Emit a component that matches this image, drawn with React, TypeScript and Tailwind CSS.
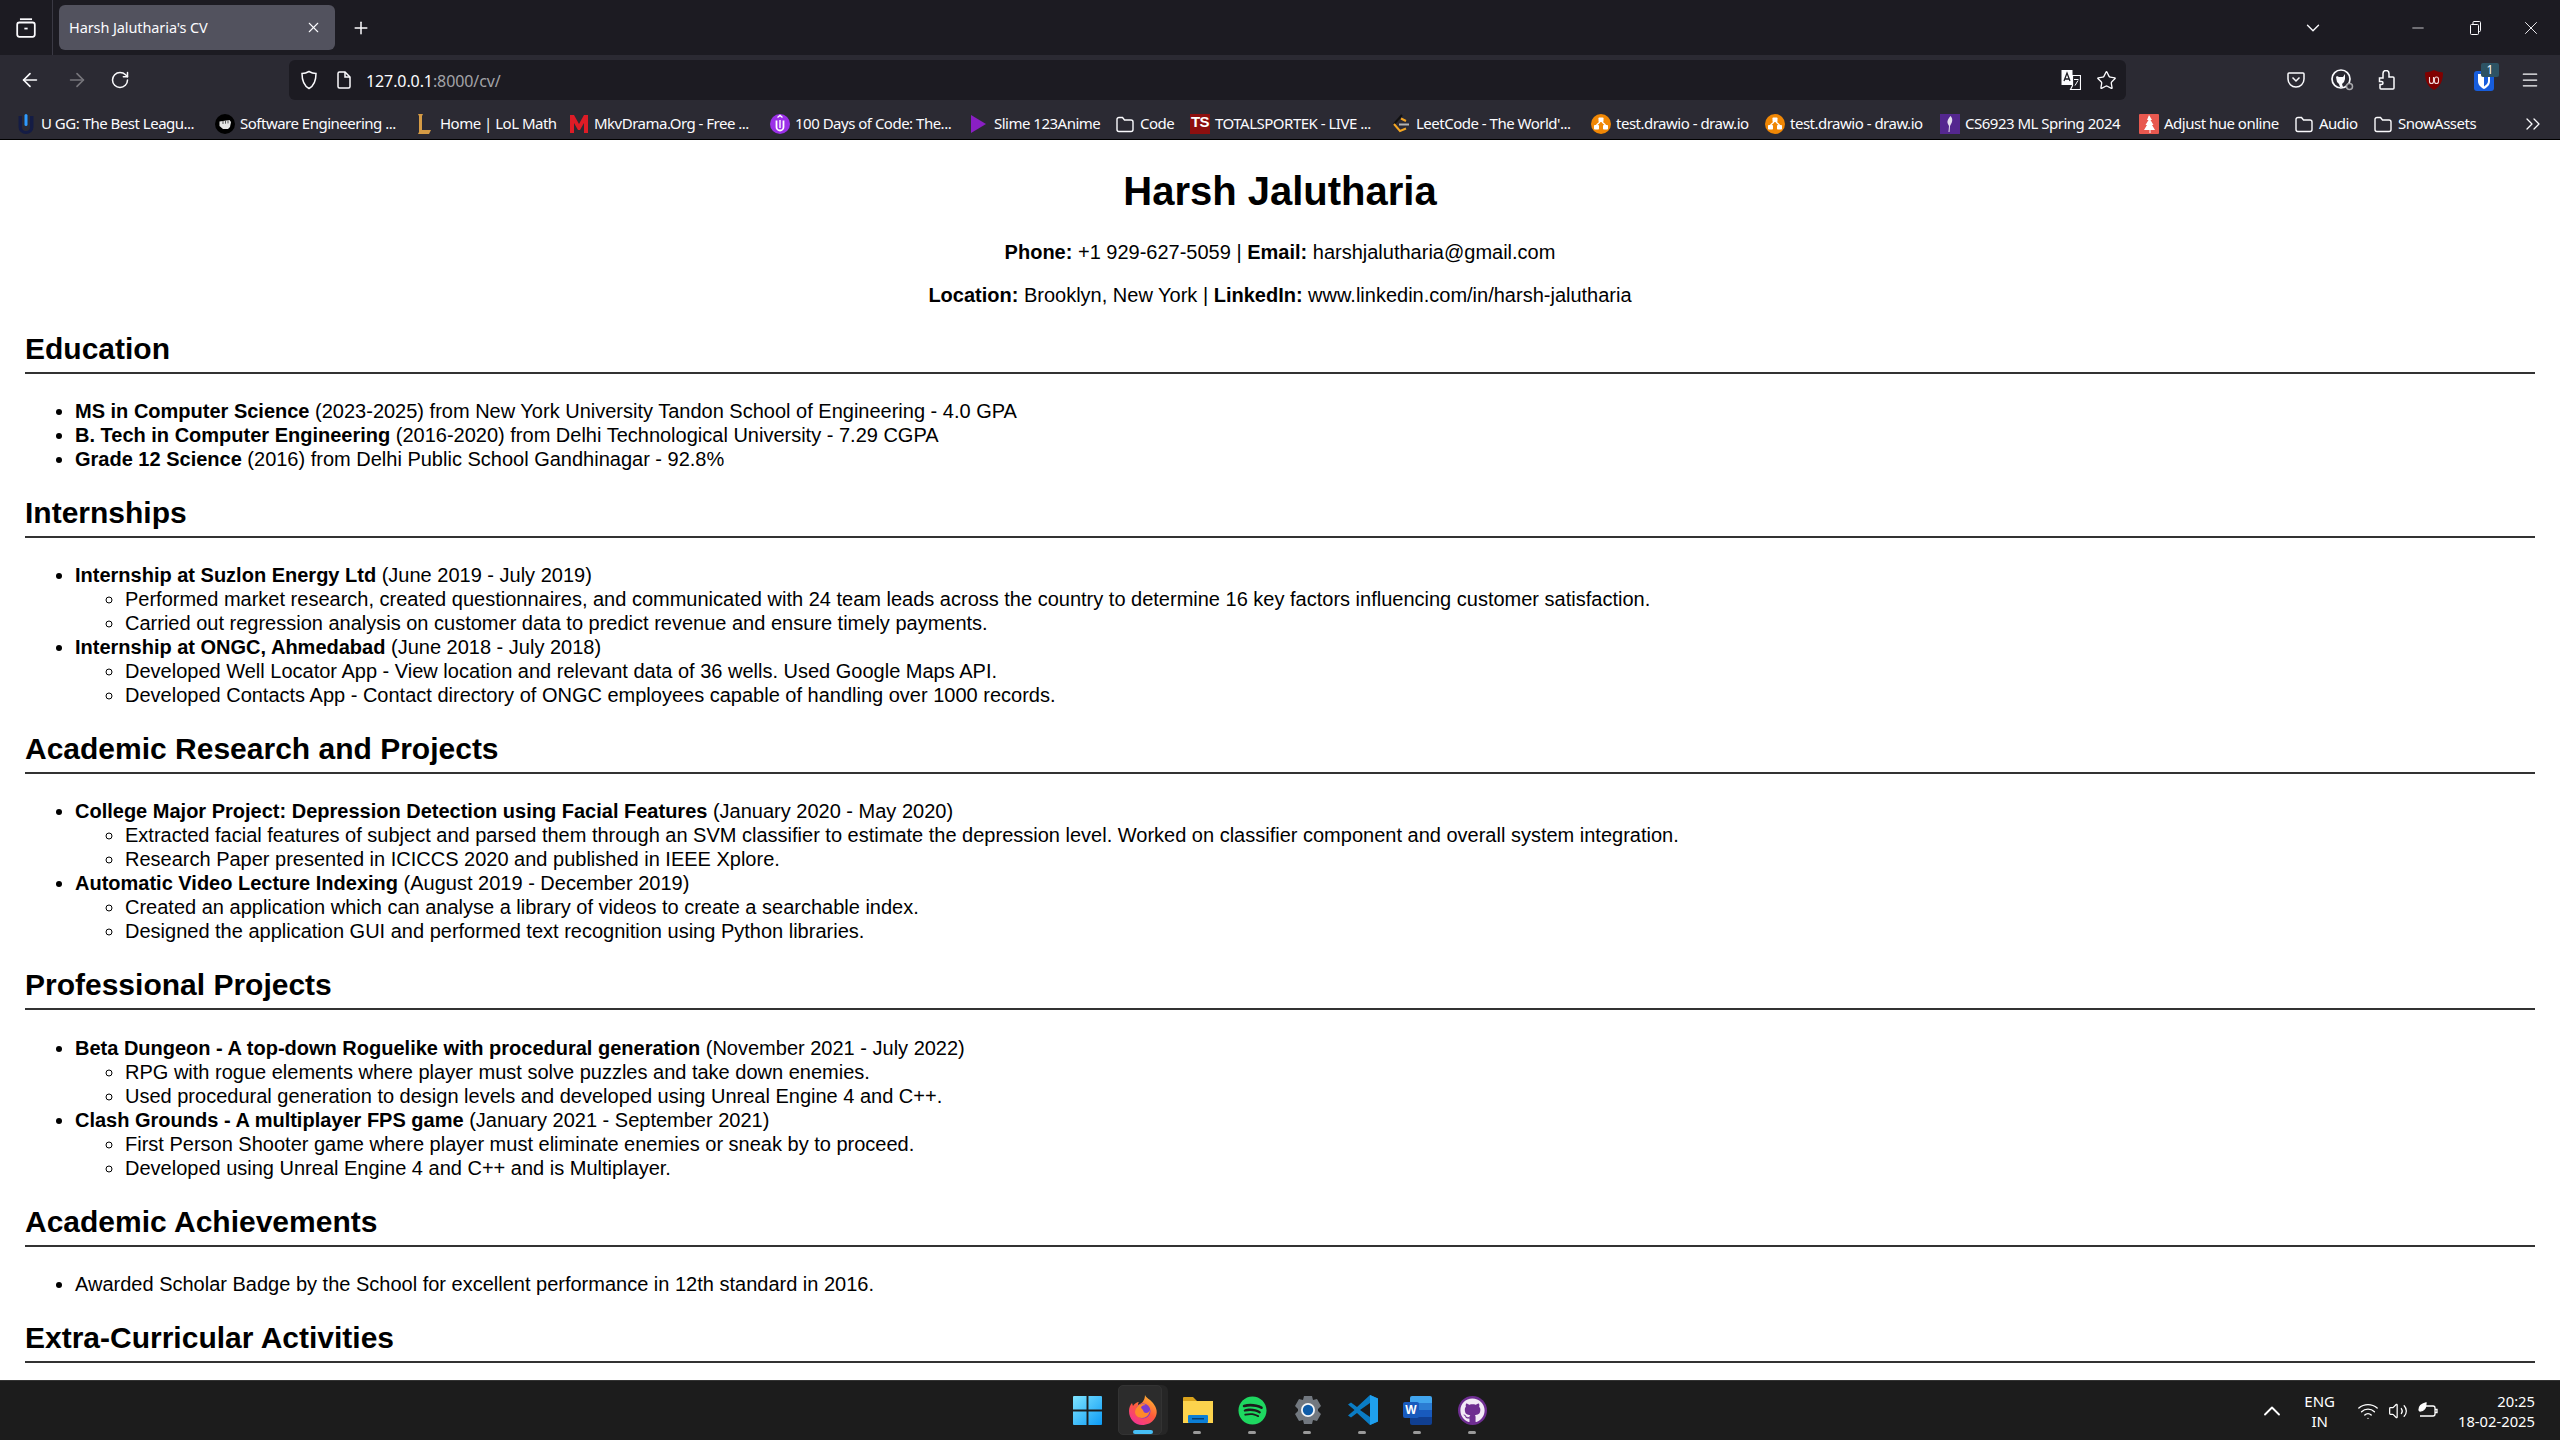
import type { ReactNode } from "react";
import { ArrowLeft, ArrowRight, ChevronDown, ChevronUp, ChevronsRight, Menu, Minus, Plus, RotateCw, Star, Volume2, Wifi, X } from "lucide-react";
import { FaGithub, FaSpotify } from "react-icons/fa";

const barFont = "font-['Noto_Sans',sans-serif]";

function FolderIcon() {
  return (
    <svg viewBox="0 0 20 20" className="w-[20px] h-[20px] shrink-0" fill="none" stroke="#fbfbfe" strokeWidth="1.4">
      <path d="M2 5.500a2 2 0 0 1 2-2h3.500l2 2.500H16a2 2 0 0 1 2 2v7.500a2 2 0 0 1-2 2H4a2 2 0 0 1-2-2z" />
    </svg>
  );
}

function UggIcon() {
  return (
    <svg viewBox="0 0 20 20" className="w-[20px] h-[20px] shrink-0">
      <path d="M2.500 2h3.500v11a4 4 0 0 0 8 0V2h3.500v11a7.500 7 0 0 1-15 0z" fill="#141c45" />
      <rect x="8.500" y="0" width="3" height="12" rx="1.500" fill="#2f9bff" />
    </svg>
  );
}

function FistIcon() {
  return (
    <svg viewBox="0 0 20 20" className="w-[20px] h-[20px] shrink-0">
      <circle cx="10" cy="10" r="10" fill="#000" />
      <path d="M4.500 7.500l10-1.500 1.500 2-1 5-2 2H8l-3.500-3z" fill="#e8e8e8" />
      <path d="M8 7v3M10.500 6.700v3M13 6.400v3" stroke="#333" strokeWidth="0.8" />
    </svg>
  );
}

function LolIcon() {
  return (
    <svg viewBox="0 0 20 20" className="w-[20px] h-[20px] shrink-0">
      <path d="M3 0h5l-1 2v14h9l-2 4H3l1-2V2z" fill="#d59b45" />
    </svg>
  );
}

function MkvIcon() {
  return (
    <svg viewBox="0 0 20 20" className="w-[20px] h-[20px] shrink-0">
      <path d="M1 19V1h4l5 9 5-9h4v18h-4V9l-4 7h-2L5 9v10z" fill="#dd1c26" />
    </svg>
  );
}

function HundredIcon() {
  return (
    <svg viewBox="0 0 20 20" className="w-[20px] h-[20px] shrink-0">
      <circle cx="10" cy="10" r="10" fill="#9b30e8" />
      <path d="M6.500 6.500v6.500a3.500 3.500 0 0 0 7 0V6.500" fill="none" stroke="#fff" strokeWidth="1.800" />
      <path d="M7.500 3.500L10 1.500l2.500 2" fill="none" stroke="#fff" strokeWidth="1.400" />
      <path d="M10 6v8" stroke="#fff" strokeWidth="1.400" />
    </svg>
  );
}

function PlayIcon() {
  return (
    <svg viewBox="0 0 20 20" className="w-[20px] h-[20px] shrink-0">
      <path d="M2 1l15 9-15 9z" fill="#8a1fc4" />
    </svg>
  );
}

function TsIcon() {
  return (
    <div className="w-[20px] h-[20px] shrink-0 bg-[#8d0f0f] flex items-start justify-center text-white text-[15px] leading-[16px] font-bold font-['Liberation_Sans',sans-serif] tracking-[-0.5px]">
      TS
    </div>
  );
}

function LeetIcon() {
  return (
    <svg viewBox="0 0 20 20" className="w-[20px] h-[20px] shrink-0" fill="none" strokeWidth="2">
      <path d="M11 1L3 10" stroke="#111" />
      <path d="M3 10l6 7 6-2.500" stroke="#f5a623" />
      <path d="M10 4.500l5 2.500" stroke="#f5a623" />
      <path d="M8 10.500h10" stroke="#b3b3b3" />
    </svg>
  );
}

function DrawioIcon() {
  return (
    <svg viewBox="0 0 20 20" className="w-[20px] h-[20px] shrink-0">
      <circle cx="10" cy="10" r="10" fill="#f08705" />
      <rect x="7.500" y="3.500" width="5" height="4.500" rx="0.800" fill="#fff" />
      <rect x="3" y="11" width="5" height="4.500" rx="0.800" fill="#fff" />
      <rect x="12" y="11" width="5" height="4.500" rx="0.800" fill="#fff" />
      <path d="M9 8l-3.500 3M11 8l3.500 3" stroke="#fff" strokeWidth="1.400" />
    </svg>
  );
}

function FeatherIcon() {
  return (
    <svg viewBox="0 0 20 20" className="w-[20px] h-[20px] shrink-0">
      <rect width="20" height="20" fill="#54278f" />
      <path d="M10.500 2c2 2 2.500 5 .5 8l-1 2-.5 6h-1l.5-6-1.500-3c-.5-2 1-5 3-7z" fill="#e5e0ee" />
    </svg>
  );
}

function TreeIcon() {
  return (
    <svg viewBox="0 0 20 20" className="w-[20px] h-[20px] shrink-0">
      <rect width="20" height="20" rx="1" fill="#e8584f" />
      <path d="M10 1l3 5h-1.500l3 5h-1.500l3 5h-4.500v3h-1v-3H5l3-5H6.500l3-5H8z" fill="#fff" />
    </svg>
  );
}

type Bookmark = { icon: ReactNode; label: string; width: string };

const bookmarks: Bookmark[] = [
  { icon: <UggIcon />, label: "U GG: The Best Leagu...", width: "w-[158px]" },
  { icon: <FistIcon />, label: "Software Engineering ...", width: "w-[159px]" },
  { icon: <LolIcon />, label: "Home | LoL Math", width: "w-[113px]" },
  { icon: <MkvIcon />, label: "MkvDrama.Org - Free ...", width: "w-[160px]" },
  { icon: <HundredIcon />, label: "100 Days of Code: The...", width: "w-[158px]" },
  { icon: <PlayIcon />, label: "Slime 123Anime", width: "w-[105px]" },
  { icon: <FolderIcon />, label: "Code", width: "w-[34px]" },
  { icon: <TsIcon />, label: "TOTALSPORTEK - LIVE ...", width: "w-[160px]" },
  { icon: <LeetIcon />, label: "LeetCode - The World'...", width: "w-[159px]" },
  { icon: <DrawioIcon />, label: "test.drawio - draw.io", width: "w-[133px]" },
  { icon: <DrawioIcon />, label: "test.drawio - draw.io", width: "w-[134px]" },
  { icon: <FeatherIcon />, label: "CS6923 ML Spring 2024", width: "w-[158px]" },
  { icon: <TreeIcon />, label: "Adjust hue online", width: "w-[114px]" },
  { icon: <FolderIcon />, label: "Audio", width: "w-[38px]" },
  { icon: <FolderIcon />, label: "SnowAssets", width: "w-[78px]" },
];

function TitleBar() {
  return (
    <div className={`h-[55px] shrink-0 bg-[#1c1b22] flex items-stretch text-[#fbfbfe] ${barFont}`}>
      <div className="w-[53px] flex items-center justify-center border-r border-[#3a3944]">
        <svg viewBox="0 0 20 20" className="w-[22px] h-[22px]" fill="none" stroke="#fbfbfe" strokeWidth="1.600">
          <rect x="2" y="5" width="16" height="13" rx="2" />
          <path d="M4.500 2h11" />
          <path d="M8.500 10.500h3" />
        </svg>
      </div>
      <div className="ml-[6px] mt-[5px] w-[276px] h-[45px] bg-[#52525e] rounded-[6px] flex items-center justify-between pl-[10px] pr-[13px]">
        <span className="text-[14.5px] tracking-[-0.1px]">Harsh Jalutharia's CV</span>
        <X size={17} strokeWidth={1.5} />
      </div>
      <div className="ml-[16px] flex items-center">
        <Plus size={20} strokeWidth={1.8} />
      </div>
      <div className="flex-1" />
      <div className="flex items-center">
        <ChevronDown size={22} strokeWidth={1.5} className="mr-[85px]" />
        <Minus size={18} strokeWidth={1} className="mr-[40px]" />
        <svg viewBox="0 0 16 16" className="w-[16px] h-[16px] mr-[37px]" fill="none" stroke="#fbfbfe" strokeWidth="1">
          <rect x="3.500" y="4.500" width="8" height="10" rx="1" />
          <path d="M6 4.500V2.500a1 1 0 0 1 1-1h5.500a1 1 0 0 1 1 1v8a1 1 0 0 1-1 1h-1" />
        </svg>
        <X size={22} strokeWidth={1} className="mr-[18px]" />
      </div>
    </div>
  );
}

function NavBar() {
  return (
    <div className="h-[48px] shrink-0 bg-[#2b2a33] pt-[2px] flex items-center text-[#fbfbfe]">
      <ArrowLeft size={22} strokeWidth={1.8} className="ml-[19px]" />
      <ArrowRight size={22} strokeWidth={1.8} className="ml-[25px] text-[#77767c]" />
      <RotateCw size={20} strokeWidth={1.8} className="ml-[22px]" />
      <div className={`ml-[159px] h-[40px] w-[1837px] bg-[#1c1b22] rounded-[6px] flex items-center ${barFont}`}>
        <svg viewBox="0 0 20 20" className="ml-[10px] w-[20px] h-[20px]" fill="none" stroke="#fbfbfe" strokeWidth="1.500">
          <path d="M10 1.500c2.500 1.500 5 2 7 2 0 7-1.500 12-7 15-5.500-3-7-8-7-15 2 0 4.500-.5 7-2z" />
        </svg>
        <svg viewBox="0 0 20 20" className="ml-[15px] w-[20px] h-[20px]" fill="none" stroke="#fbfbfe" strokeWidth="1.500">
          <path d="M4 3.500a1.500 1.500 0 0 1 1.500-1.500H11l5 5v9.500a1.500 1.500 0 0 1-1.500 1.500h-9A1.500 1.500 0 0 1 4 16.500z" />
          <path d="M11 2v5h5" />
        </svg>
        <span className="ml-[12px] mt-[2px] text-[16px] tracking-[-0.1px]">
          127.0.0.1<span className="text-[#a3a3a8]">:8000/cv/</span>
        </span>
        <div className="flex-1" />
        <svg viewBox="0 0 20 20" className="w-[20px] h-[20px] mr-[15px]">
          <rect x="0.500" y="0" width="11" height="15" fill="#fbfbfe" />
          <path d="M11.500 5.500h8v14h-10l2-4z" fill="none" stroke="#fbfbfe" strokeWidth="1.200" />
          <path d="M3 11l3-8 3 8M4 9h4" stroke="#1c1b22" strokeWidth="1.300" fill="none" />
          <path d="M13 9.500h4.500M14 15.500l3-5" stroke="#fbfbfe" strokeWidth="1" />
        </svg>
        <Star size={21} strokeWidth={1.5} className="mr-[9px]" />
      </div>
      <div className="flex-1" />
      <svg viewBox="0 0 18 16" className="w-[18px] h-[16px] mr-[26px]" fill="none" stroke="#fbfbfe" strokeWidth="1.500">
        <path d="M2 1h14a1 1 0 0 1 1 1v5a8 8 0 0 1-16 0V2a1 1 0 0 1 1-1z" strokeLinejoin="round" />
        <path d="M5.500 5.500L9 9l3.500-3.500" />
      </svg>
      <svg viewBox="0 0 23 22" className="w-[23px] h-[22px] mr-[24px]" fill="none">
        <circle cx="10" cy="10" r="9" stroke="#fbfbfe" strokeWidth="1.700" />
        <path d="M5 8l1-1 2 1h4l2-3v5l-1 3-2 2 1 3H9l-1-3-2-2z" fill="#fbfbfe" />
        <circle cx="18.500" cy="17.500" r="3" fill="#2b2a33" stroke="#a8a8ac" strokeWidth="1.500" />
      </svg>
      <svg viewBox="0 0 18 20" className="w-[18px] h-[20px] mr-[29px]" fill="none" stroke="#fbfbfe" strokeWidth="1.500">
        <path d="M5 8V3.500a3 3 0 0 1 6 0V7h4a1 1 0 0 1 1 1v10a1 1 0 0 1-1 1H3a1 1 0 0 1-1-1v-3.500h1.500a1.500 1.500 0 0 0 0-3H1.500V8z" />
      </svg>
      <svg viewBox="0 0 18 20" className="w-[18px] h-[20px] mr-[31px]">
        <path d="M9 0c3 1.500 5.500 2 9 2.500 0 8-2.500 14-9 17.500-6.500-3.500-9-9.500-9-17.500C3.500 2 6 1.500 9 0z" fill="#800000" />
        <path d="M4.500 7v4.500a2 2 0 0 0 4 0V7" fill="none" stroke="#f0d8d8" strokeWidth="1.100" />
        <rect x="9.500" y="7" width="4" height="6.500" rx="2" fill="none" stroke="#f0d8d8" strokeWidth="1.100" />
      </svg>
      <div className="relative w-[20px] h-[20px] mr-[26px] mt-[2px]">
        <svg viewBox="0 0 20 20" className="w-[20px] h-[20px]">
          <rect width="20" height="20" rx="3" fill="#175ddc" />
          <path d="M4 3h12v7c0 4-3 6.500-6 8-3-1.500-6-4-6-8z" fill="#fff" />
          <path d="M10 5h4v5c0 2.500-2 4-4 5.500z" fill="#175ddc" />
        </svg>
        <div className="absolute -top-[8px] left-[7px] w-[18px] h-[14px] bg-[#2d5364] rounded-[2px] text-white text-[12px] leading-[14px] text-center font-['Noto_Sans',sans-serif]">
          1
        </div>
      </div>
      <Menu size={20} strokeWidth={1.5} className="mr-[20px]" />
    </div>
  );
}

function BookmarksBar() {
  return (
    <div className={`h-[37px] shrink-0 bg-[#2b2a33] border-b border-black flex items-center pt-[5px] text-[#fbfbfe] text-[15px] pl-[16px] ${barFont}`}>
      <div className="flex items-center gap-[16px]">
        {bookmarks.map((b, i) => (
          <div key={i} className="flex items-center gap-[5px]">
            {b.icon}
            <span className={`${b.width} whitespace-nowrap tracking-[-0.5px]`}>{b.label}</span>
          </div>
        ))}
      </div>
      <div className="flex-1" />
      <ChevronsRight size={24} strokeWidth={1.3} className="mr-[15px]" />
    </div>
  );
}

function WindowsIcon() {
  return (
    <svg viewBox="0 0 30 30" className="w-[29px] h-[29px]">
      <defs>
        <linearGradient id="winG" x1="0" y1="0" x2="1" y2="1">
          <stop offset="0" stopColor="#7fe4ff" />
          <stop offset="1" stopColor="#0c9bf5" />
        </linearGradient>
      </defs>
      <path d="M0 1a1 1 0 0 1 1-1h13v14H0zM16 0h13a1 1 0 0 1 1 1v13H16zM0 16h14v14H1a1 1 0 0 1-1-1zM16 16h14v13a1 1 0 0 1-1 1H16z" fill="url(#winG)" />
    </svg>
  );
}

function FirefoxIcon() {
  return (
    <svg viewBox="0 0 30 30" className="w-[30px] h-[30px]">
      <defs>
        <linearGradient id="ffG" x1="0.800" y1="0" x2="0.200" y2="1">
          <stop offset="0" stopColor="#ffbd2e" />
          <stop offset="0.500" stopColor="#ff5a3c" />
          <stop offset="1" stopColor="#f2309a" />
        </linearGradient>
      </defs>
      <path d="M17 0c1 3 5 4 8 8 4 5 5 10 2 15-3 5-8 7-13 7-7 0-13-6-13-14 0-3 1-6 3-8l1 3c1-2 4-4 6-4-1 1-1 2-1 3 3-1 7-4 7-10z" fill="url(#ffG)" />
      <circle cx="15" cy="16" r="7.500" fill="#7a3bd1" />
      <path d="M9 12c2-3 6-4 9-2-3 0-5 1-5 3 3 2 2 5 5 5 2 0 3-1 4-3-.5 5-4 8-8 8-4 0-7-3-7-6 0-2 1-4 2-5z" fill="#ff8a2a" />
    </svg>
  );
}

function FilesIcon() {
  return (
    <svg viewBox="0 0 30 30" className="w-[30px] h-[30px]">
      <path d="M0 3a1 1 0 0 1 1-1h9l4 4h16v4H0z" fill="#d9a21b" />
      <path d="M0 6h30v22H0z" fill="#fcd34d" />
      <rect x="5" y="20" width="20" height="8" rx="1" fill="#0c7fd6" />
      <rect x="9" y="23" width="12" height="1.500" fill="#063f72" />
    </svg>
  );
}

function GearIcon() {
  return (
    <svg viewBox="0 0 30 30" className="w-[30px] h-[30px]">
      <path d="M11 1h8l1 4 4-1 4 7-3 3v2l3 3-4 7-4-1-1 4h-8l-1-4-4 1-4-7 3-3v-2L2 11l4-7 4 1z" fill="#72787f" />
      <circle cx="15" cy="15" r="7" fill="#f3f6f8" />
      <circle cx="15" cy="15" r="5.200" fill="#0e5ca8" />
    </svg>
  );
}

function VsCodeIcon() {
  return (
    <svg viewBox="0 0 30 30" className="w-[30px] h-[30px]">
      <path d="M22 0l8 3.500v23L22 30 9 18l-6 4.500-3-2L6.500 15 0 9.500l3-2L9 12z" fill="#0a7cc4" />
      <path d="M22 0l8 3.500v23L22 30z" fill="#1fa0ee" />
      <path d="M22 8L12 15l10 7z" fill="#1c1c1c" />
    </svg>
  );
}

function WordIcon() {
  return (
    <div className="relative w-[29px] h-[29px]">
      <div className="absolute right-0 top-0 w-[22px] h-[29px] rounded-[2px] overflow-hidden flex flex-col">
        <div className="flex-1 bg-[#41a5ee]" />
        <div className="flex-1 bg-[#2b7cd3]" />
        <div className="flex-1 bg-[#185abd]" />
        <div className="flex-1 bg-[#103f91]" />
      </div>
      <div className="absolute left-0 top-[6px] w-[16px] h-[16px] bg-[#185abd] rounded-[2px] text-white text-[12px] leading-[16px] font-bold text-center font-['Liberation_Sans',sans-serif]">
        W
      </div>
    </div>
  );
}

function GithubIcon() {
  return (
    <div className="w-[29px] h-[29px] rounded-full bg-[#6e2d91] flex items-center justify-center">
      <FaGithub size={25} color="#f2eaf6" />
    </div>
  );
}

type TaskItem = { icon: ReactNode; mark: "none" | "dot" | "active" };

const taskItems: TaskItem[] = [
  { icon: <WindowsIcon />, mark: "none" },
  { icon: <FirefoxIcon />, mark: "active" },
  { icon: <FilesIcon />, mark: "dot" },
  { icon: <FaSpotify size={29} color="#1ed760" />, mark: "dot" },
  { icon: <GearIcon />, mark: "dot" },
  { icon: <VsCodeIcon />, mark: "dot" },
  { icon: <WordIcon />, mark: "dot" },
  { icon: <GithubIcon />, mark: "dot" },
];

function Taskbar() {
  return (
    <div className={`h-[60px] shrink-0 bg-[#1c1c1c] border-t border-[#333333] flex items-center text-white ${barFont}`}>
      <div className="flex-1" />
      <div className="flex">
        {taskItems.map((t, i) => (
          <div key={i} className="relative w-[55px] h-[59px] flex items-center justify-center">
            {t.mark === "active" && (
              <>
                <div className="absolute left-[40px] top-[4px] w-[13px] h-[50px] bg-[#262626] rounded-r-[6px]" />
                <div className="absolute left-[3px] top-[4px] w-[44px] h-[50px] bg-[#2c2c2c] rounded-[5px] border border-[#333333]" />
                <div className="absolute left-[18px] bottom-[6px] w-[20px] h-[4px] rounded-full bg-[#47bff5]" />
              </>
            )}
            {t.mark === "dot" && <div className="absolute left-[23px] bottom-[6px] w-[8px] h-[3px] rounded-full bg-[#9a9a9a]" />}
            <div className="relative -mt-[1px]">{t.icon}</div>
          </div>
        ))}
      </div>
      <div className="flex-1 flex items-center justify-end">
        <ChevronUp size={28} strokeWidth={1.6} className="mr-[18px]" />
        <div className="text-[15px] leading-[20px] text-center mr-[22px]">
          ENG
          <br />
          IN
        </div>
        <Wifi size={22} strokeWidth={1.5} className="mr-[9px]" />
        <Volume2 size={20} strokeWidth={1.5} className="mr-[9px]" />
        <svg viewBox="0 0 22 20" className="w-[22px] h-[20px] mr-[19px]" fill="none" stroke="#fff" strokeWidth="1.300">
          <path d="M7 5h9a2 2 0 0 1 2 2v6a2 2 0 0 1-2 2H3" />
          <path d="M18 8.500h2v3h-2" />
          <path d="M2 9c0-4 3-6 7-7 0 5-2 8-6 8z" fill="#fff" />
        </svg>
        <div className="text-[14.75px] leading-[20px] text-right mr-[25px]">
          20:25
          <br />
          18-02-2025
        </div>
      </div>
    </div>
  );
}

function SectionTitle({ children }: { children: ReactNode }) {
  return <h2 className="mt-[24px] mb-[25px] pb-[6px] border-b-2 border-[#333333] text-[30px] leading-[35px] font-bold">{children}</h2>;
}

function Entry({ title, rest, items }: { title: string; rest: string; items?: string[] }) {
  return (
    <li>
      <strong className="font-bold">{title}</strong> {rest}
      {items && (
        <ul className="[list-style-type:circle] pl-[50px]">
          {items.map((it) => (
            <li key={it}>{it}</li>
          ))}
        </ul>
      )}
    </li>
  );
}

function Resume() {
  return (
    <div className="flex-1 min-h-0 overflow-hidden bg-white text-black px-[25px] pt-[28px] text-[20px] leading-[24px] font-['Liberation_Sans',sans-serif]">
      <h1 className="text-[40px] leading-[46px] font-bold text-center mb-[26px]">Harsh Jalutharia</h1>
      <p className="text-center mb-[19px]">
        <strong>Phone:</strong> +1 929-627-5059 | <strong>Email:</strong> harshjalutharia@gmail.com
      </p>
      <p className="text-center">
        <strong>Location:</strong> Brooklyn, New York | <strong>LinkedIn:</strong> www.linkedin.com/in/harsh-jalutharia
      </p>

      <SectionTitle>Education</SectionTitle>
      <ul className="[list-style-type:disc] pl-[50px]">
        <Entry title="MS in Computer Science" rest="(2023-2025) from New York University Tandon School of Engineering - 4.0 GPA" />
        <Entry title="B. Tech in Computer Engineering" rest="(2016-2020) from Delhi Technological University - 7.29 CGPA" />
        <Entry title="Grade 12 Science" rest="(2016) from Delhi Public School Gandhinagar - 92.8%" />
      </ul>

      <SectionTitle>Internships</SectionTitle>
      <ul className="[list-style-type:disc] pl-[50px]">
        <Entry
          title="Internship at Suzlon Energy Ltd"
          rest="(June 2019 - July 2019)"
          items={[
            "Performed market research, created questionnaires, and communicated with 24 team leads across the country to determine 16 key factors influencing customer satisfaction.",
            "Carried out regression analysis on customer data to predict revenue and ensure timely payments.",
          ]}
        />
        <Entry
          title="Internship at ONGC, Ahmedabad"
          rest="(June 2018 - July 2018)"
          items={[
            "Developed Well Locator App - View location and relevant data of 36 wells. Used Google Maps API.",
            "Developed Contacts App - Contact directory of ONGC employees capable of handling over 1000 records.",
          ]}
        />
      </ul>

      <SectionTitle>Academic Research and Projects</SectionTitle>
      <ul className="[list-style-type:disc] pl-[50px]">
        <Entry
          title="College Major Project: Depression Detection using Facial Features"
          rest="(January 2020 - May 2020)"
          items={[
            "Extracted facial features of subject and parsed them through an SVM classifier to estimate the depression level. Worked on classifier component and overall system integration.",
            "Research Paper presented in ICICCS 2020 and published in IEEE Xplore.",
          ]}
        />
        <Entry
          title="Automatic Video Lecture Indexing"
          rest="(August 2019 - December 2019)"
          items={[
            "Created an application which can analyse a library of videos to create a searchable index.",
            "Designed the application GUI and performed text recognition using Python libraries.",
          ]}
        />
      </ul>

      <SectionTitle>Professional Projects</SectionTitle>
      <ul className="[list-style-type:disc] pl-[50px] mt-[26px]">
        <Entry
          title="Beta Dungeon - A top-down Roguelike with procedural generation"
          rest="(November 2021 - July 2022)"
          items={[
            "RPG with rogue elements where player must solve puzzles and take down enemies.",
            "Used procedural generation to design levels and developed using Unreal Engine 4 and C++.",
          ]}
        />
        <Entry
          title="Clash Grounds - A multiplayer FPS game"
          rest="(January 2021 - September 2021)"
          items={[
            "First Person Shooter game where player must eliminate enemies or sneak by to proceed.",
            "Developed using Unreal Engine 4 and C++ and is Multiplayer.",
          ]}
        />
      </ul>

      <SectionTitle>Academic Achievements</SectionTitle>
      <ul className="[list-style-type:disc] pl-[50px]">
        <li>Awarded Scholar Badge by the School for excellent performance in 12th standard in 2016.</li>
      </ul>

      <SectionTitle>Extra-Curricular Activities</SectionTitle>
    </div>
  );
}

export default function App() {
  return (
    <div className="h-screen w-full flex flex-col overflow-hidden">
      <TitleBar />
      <NavBar />
      <BookmarksBar />
      <Resume />
      <Taskbar />
    </div>
  );
}
